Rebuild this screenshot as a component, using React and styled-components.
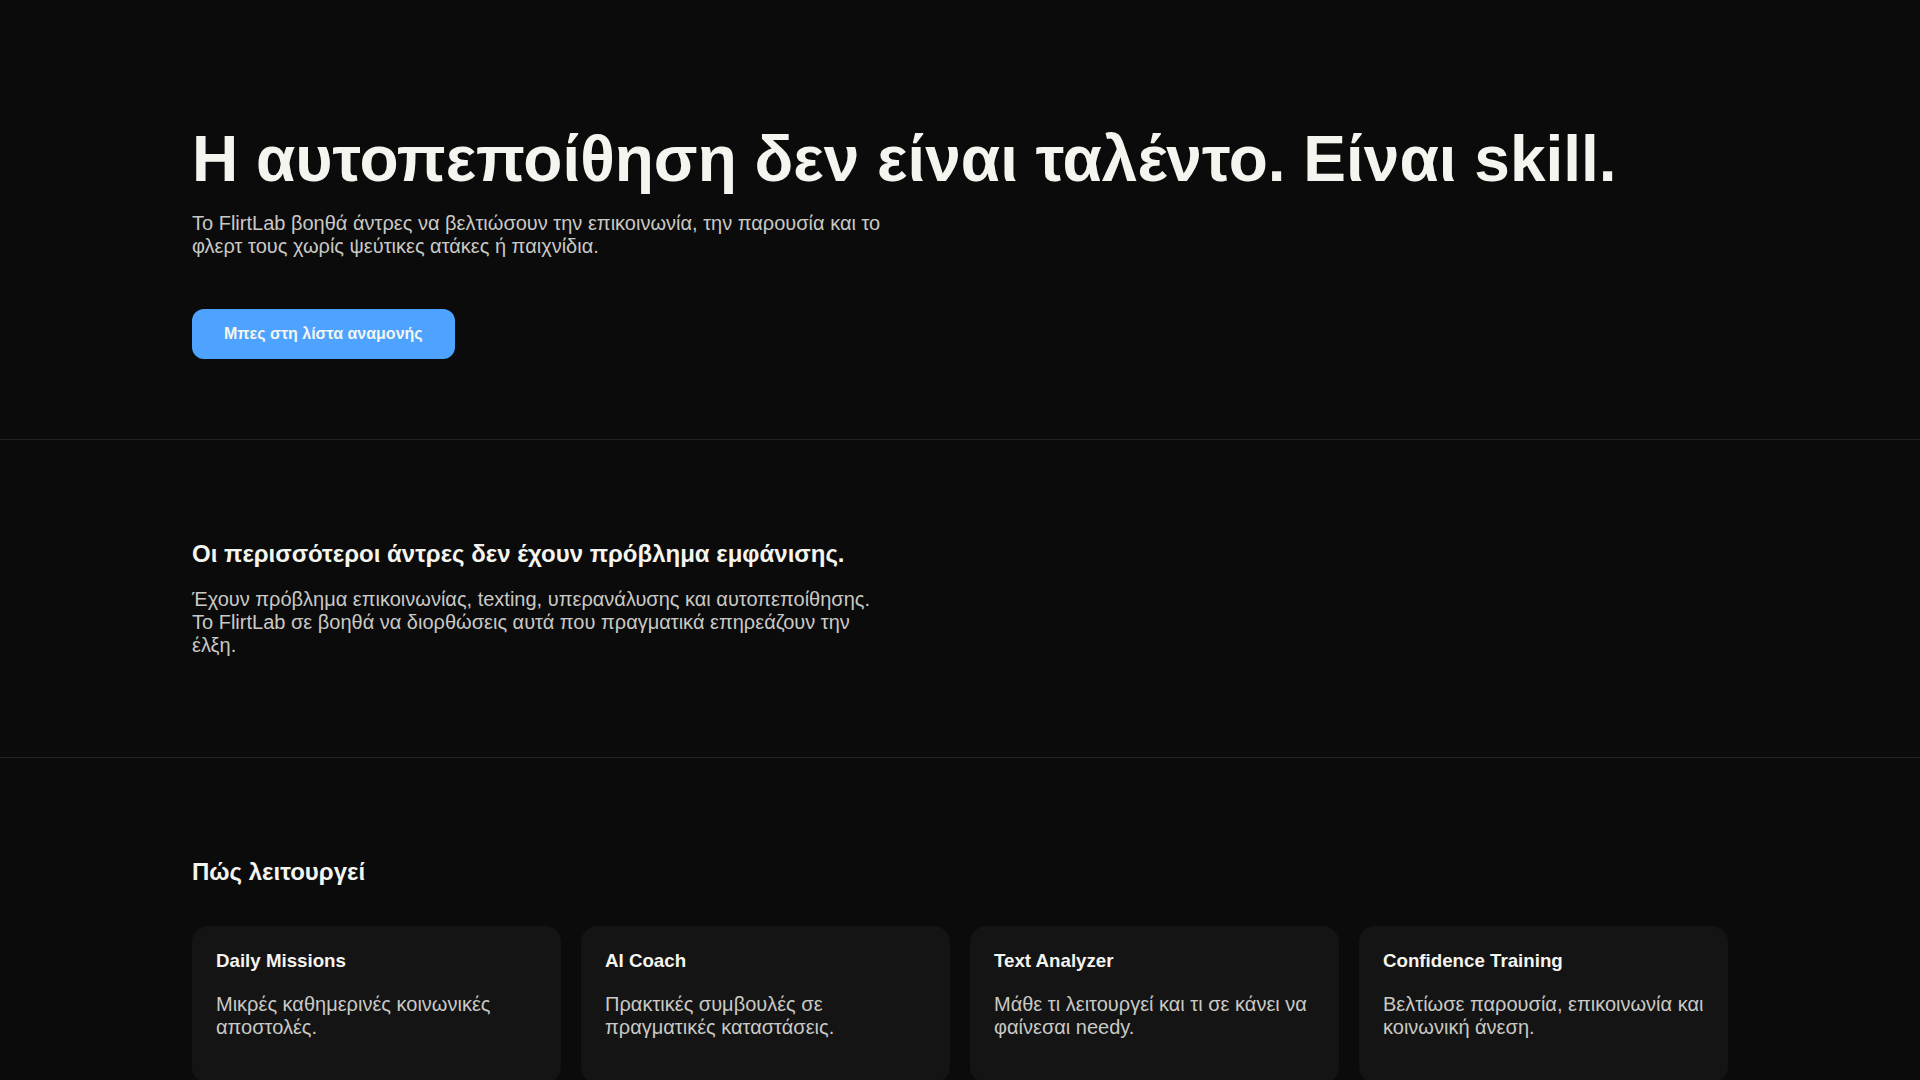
import React from 'react';
import styled, { createGlobalStyle } from 'styled-components';

const GlobalStyle = createGlobalStyle`
  html, body {
    margin: 0;
    padding: 0;
    background: #0b0b0b;
    color: #f5f5f0;
    font-family: "Liberation Sans", Arial, sans-serif;
  }
`;

const Section = styled.section`
  padding: ${({ $top }) => $top || '80px'} 192px 80px;
  border-bottom: ${({ $last }) => ($last ? 'none' : '1px solid #222')};
`;

const HeroTitle = styled.h1`
  margin: 0 0 18px;
  font-size: 64px;
  line-height: 1.1;
  font-weight: 700;
  color: #f5f5f0;
`;

const HeroText = styled.p`
  margin: 0;
  max-width: 700px;
  font-size: 20px;
  color: #c9c9c5;
`;

const CtaButton = styled.button`
  margin-top: 51px;
  background: #4da3ff;
  color: #f5f5f0;
  border: none;
  border-radius: 12px;
  padding: 16px 32px;
  font-family: inherit;
  font-size: 16px;
  font-weight: 700;
  cursor: pointer;
`;

const SectionTitle = styled.h2`
  margin: 20px 0;
  font-size: 24px;
  font-weight: 700;
  color: #f5f5f0;
`;

const BodyText = styled.p`
  margin: 20px 0;
  max-width: 700px;
  font-size: 20px;
  color: #c9c9c5;
`;

const Grid = styled.div`
  display: grid;
  grid-template-columns: repeat(4, 1fr);
  gap: 20px;
  margin-top: 40px;
`;

const Card = styled.div`
  background: #141414;
  border-radius: 16px;
  padding: 24px;
`;

const CardTitle = styled.h3`
  margin: 0 0 21px;
  font-size: 18.72px;
  font-weight: 700;
  color: #f5f5f0;
`;

const CardText = styled.p`
  margin: 0 0 20px;
  font-size: 20px;
  color: #c9c9c5;
`;

const steps = [
  { title: 'Daily Missions', text: 'Μικρές καθημερινές κοινωνικές αποστολές.' },
  { title: 'AI Coach', text: 'Πρακτικές συμβουλές σε πραγματικές καταστάσεις.' },
  { title: 'Text Analyzer', text: 'Μάθε τι λειτουργεί και τι σε κάνει να φαίνεσαι needy.' },
  { title: 'Confidence Training', text: 'Βελτίωσε παρουσία, επικοινωνία και κοινωνική άνεση.' },
];

const App = () => {
  return (
    <>
      <GlobalStyle />
      <Section $top="124px">
        <HeroTitle>Η αυτοπεποίθηση δεν είναι ταλέντο. Είναι skill.</HeroTitle>
        <HeroText>
          Το FlirtLab βοηθά άντρες να βελτιώσουν την επικοινωνία, την παρουσία και το φλερτ τους χωρίς ψεύτικες ατάκες ή παιχνίδια.
        </HeroText>
        <CtaButton>Μπες στη λίστα αναμονής</CtaButton>
      </Section>

      <Section>
        <SectionTitle>Οι περισσότεροι άντρες δεν έχουν πρόβλημα εμφάνισης.</SectionTitle>
        <BodyText>
          Έχουν πρόβλημα επικοινωνίας, texting, υπερανάλυσης και αυτοπεποίθησης. Το FlirtLab σε βοηθά να διορθώσεις αυτά που πραγματικά επηρεάζουν την έλξη.
        </BodyText>
      </Section>

      <Section $last>
        <SectionTitle>Πώς λειτουργεί</SectionTitle>
        <Grid>
          {steps.map((s) => (
            <Card key={s.title}>
              <CardTitle>{s.title}</CardTitle>
              <CardText>{s.text}</CardText>
            </Card>
          ))}
        </Grid>
      </Section>
    </>
  );
};

export default App;
